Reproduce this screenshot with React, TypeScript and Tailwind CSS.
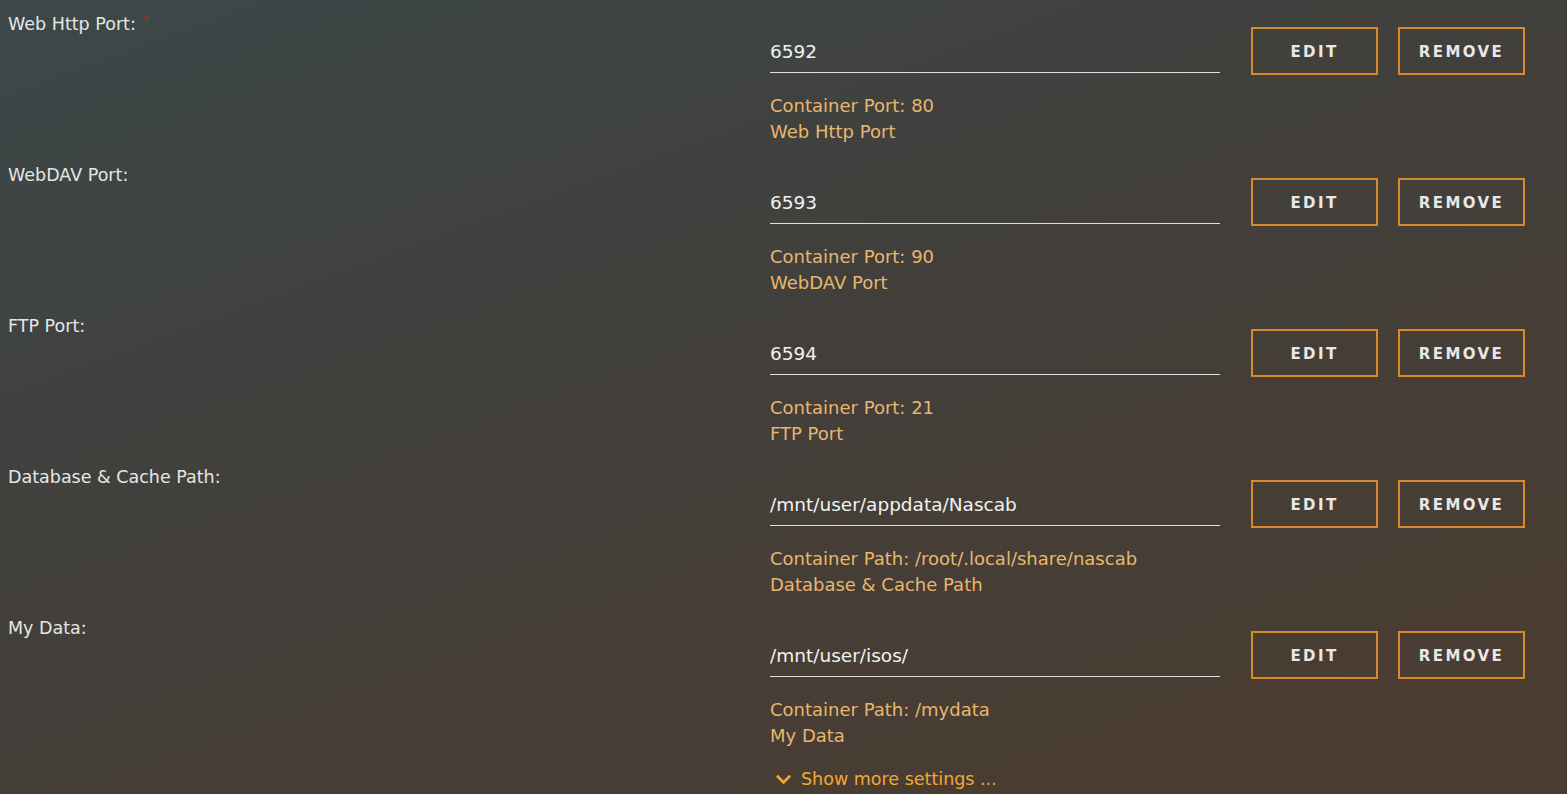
import { FaChevronDown } from 'react-icons/fa';

type Row = {
  label: string;
  required?: boolean;
  value: string;
  target: string;
  desc: string;
};

const rows: Row[] = [
  { label: 'Web Http Port:', required: true, value: '6592', target: 'Container Port: 80', desc: 'Web Http Port' },
  { label: 'WebDAV Port:', value: '6593', target: 'Container Port: 90', desc: 'WebDAV Port' },
  { label: 'FTP Port:', value: '6594', target: 'Container Port: 21', desc: 'FTP Port' },
  { label: 'Database & Cache Path:', value: '/mnt/user/appdata/Nascab', target: 'Container Path: /root/.local/share/nascab', desc: 'Database & Cache Path' },
  { label: 'My Data:', value: '/mnt/user/isos/', target: 'Container Path: /mydata', desc: 'My Data' },
];

function ConfigRow({ row }: { row: Row }) {
  return (
    <div className="flex h-[151px]">
      {/* Label */}
      <div className="w-[770px] pl-2 text-[17.5px] leading-[22px] text-[#e6e6e6]">
        {row.label}
        {row.required && (
          <span className="relative -top-[4px] ml-[6px] align-top text-[14px] text-[#d0141a]">*</span>
        )}
      </div>

      {/* Value + description */}
      <div className="mt-[14px] w-[450px]">
        <div className="flex h-[46px] items-center border-b border-[#e0e0e0] pt-[4px] text-[18.5px] text-[#f2f2f2]">
          {row.value}
        </div>
        <div className="mt-[20px] text-[18px] leading-[26px] text-[#e9b66e]">
          <div>{row.target}</div>
          <div>{row.desc}</div>
        </div>
      </div>

      {/* Actions */}
      <div className="ml-[31px] mt-[14px] flex gap-5">
        <button
          type="button"
          className="h-[48px] w-[127px] border-2 border-[#d68a2a] pt-[2px] text-[15px] font-bold tracking-[0.16em] text-[#e8e8e8]"
        >
          EDIT
        </button>
        <button
          type="button"
          className="h-[48px] w-[127px] border-2 border-[#d68a2a] pt-[2px] text-[15px] font-bold tracking-[0.16em] text-[#e8e8e8]"
        >
          REMOVE
        </button>
      </div>
    </div>
  );
}

export default function App() {
  return (
    <div className="h-[794px] w-full overflow-hidden bg-[linear-gradient(160deg,#3c4849_0%,#423f3b_45%,#4c3c2f_100%)] pt-[13px] font-['DejaVu_Sans',sans-serif]">
      {rows.map((row) => (
        <ConfigRow key={row.label} row={row} />
      ))}

      <div className="-mt-[2px] ml-[775px] flex items-center gap-[9px] text-[17.5px] leading-[26px] text-[#f2a732]">
        <FaChevronDown size={17} />
        <span>Show more settings ...</span>
      </div>
    </div>
  );
}
